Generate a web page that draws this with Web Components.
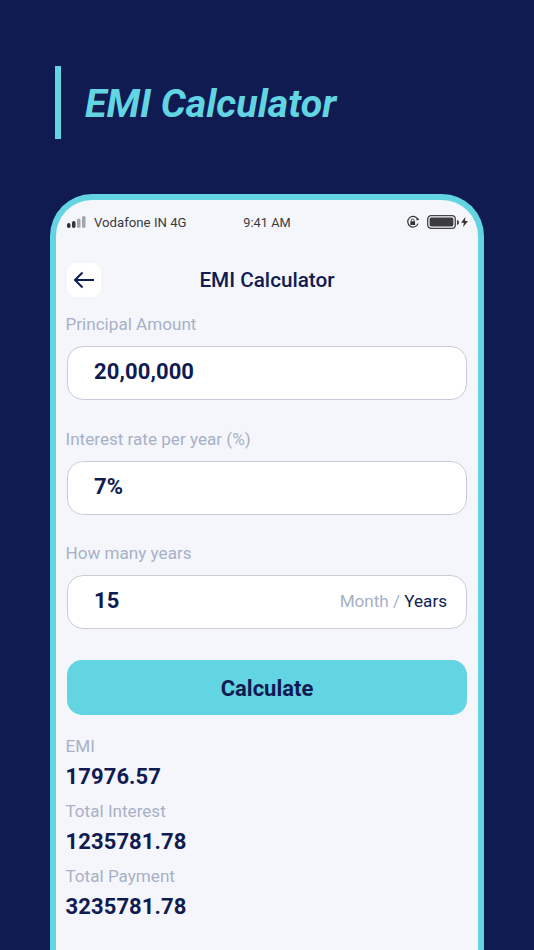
<!DOCTYPE html>
<html>
<head>
<meta charset="utf-8">
<title>EMI Calculator</title>
<style>
  html, body { margin: 0; height: 950px; overflow: hidden; background: #101b52; }
  body { font-family: Roboto, "Liberation Sans", sans-serif; }
</style>
</head>
<body>
<promo-page>
  <promo-title slot="title">EMI Calculator</promo-title>
  <phone-frame>
    <status-bar></status-bar>
    <app-header>EMI Calculator</app-header>
    <emi-field label="Principal Amount" value="20,00,000"></emi-field>
    <emi-field label="Interest rate per year (%)" value="7%"></emi-field>
    <emi-field label="How many years" value="15" unit></emi-field>
    <calc-button>Calculate</calc-button>
    <emi-result label="EMI" value="17976.57"></emi-result>
    <emi-result label="Total Interest" value="1235781.78"></emi-result>
    <emi-result label="Total Payment" value="3235781.78"></emi-result>
  </phone-frame>
</promo-page>

<script>
// small helper, every element just sets its html in the constructor
class Base extends HTMLElement {
  constructor(html) {
    super();
    this._shadowRoot = this.attachShadow({ mode: 'open' });
    this._shadowRoot.innerHTML = html;
  }
}

class PromoPage extends Base {
  constructor() {
    super(`
    <style>
      :host { display: block; width: 534px; height: 950px; overflow: hidden; padding: 66px 0 0 50px; box-sizing: border-box; }
    </style>
    <slot name="title"></slot>
    <slot></slot>`);
  }
}

class PromoTitle extends Base {
  constructor() {
    super(`
    <style>
      :host { display: flex; align-items: center; height: 73px; margin: 0 0 55px 5px; border-left: 6px solid #62d4e2; padding-left: 24px; box-sizing: border-box; }
      span { font: italic 700 39.4px/1 Roboto, sans-serif; color: #62d4e2; position: relative; top: 1px; }
    </style>
    <span><slot></slot></span>`);
  }
}

class PhoneFrame extends Base {
  constructor() {
    super(`
    <style>
      :host { display: block; width: 434px; height: 780px; box-sizing: border-box; background: #f5f6fb; border: 6px solid #62d4e2; border-bottom: 0; border-radius: 42px 42px 0 0; padding: 0 11px 0 10px; }
    </style>
    <slot></slot>`);
  }
}

class StatusBar extends Base {
  constructor() {
    super(`
    <style>
      :host { display: grid; grid-template-columns: 1fr auto 1fr; align-items: center; height: 44px; margin: 0 -1px 19px 0; font: 400 13.2px Roboto, sans-serif; color: #3a3a3c; }
      .left, .right { display: flex; align-items: center; }
      .left { gap: 7px; margin-left: 1px; }
      .right { justify-content: flex-end; margin-right: 0; }
      svg { display: block; }
      .time { font-size: 12.8px; }
    </style>
    <div class="left">
      <svg width="20" height="12" viewBox="0 0 20 12">
        <rect x="0" y="7" width="3.5" height="5" rx="1.7" fill="#333"/>
        <rect x="5" y="5" width="3.5" height="7" rx="1.7" fill="#333"/>
        <rect x="10" y="2.500" width="3.5" height="9.500" rx="1.7" fill="#a5a5a8"/>
        <rect x="15" y="0" width="3.5" height="12" rx="1.7" fill="#a5a5a8"/>
      </svg>
      <span>Vodafone IN 4G</span>
    </div>
    <span class="time">9:41 AM</span>
    <div class="right">
      <svg width="14" height="14" viewBox="0 0 14 14" style="margin-right:7px">
        <path d="M12 8.6A5.3 5.3 0 1 1 11.6 4" fill="none" stroke="#333" stroke-width="1.2"/>
        <path d="M13.6 4.6L10.4 5.6 10.9 2.4z" fill="#333"/>
        <rect x="4.3" y="6.2" width="4.8" height="3.8" rx=".5" fill="#333"/>
        <path d="M5.3 6.4V5.3a1.4 1.4 0 0 1 2.8 0v1.1" fill="none" stroke="#333" stroke-width=".9"/>
      </svg>
      <svg width="29" height="14" viewBox="0 0 29 14">
        <rect x=".7" y=".7" width="27.6" height="12.6" rx="3.4" fill="none" stroke="#444" stroke-width="1.3"/>
        <rect x="2.6" y="2.6" width="23.8" height="8.8" rx="1.6" fill="#3c3c3e"/>
      </svg>
      <svg width="2" height="5" viewBox="0 0 2 5" style="margin-left:1px"><path d="M0 0c1.2.3 2 1.2 2 2.500s-.8 2.200-2 2.500z" fill="#444"/></svg>
      <svg width="7" height="10" viewBox="0 0 7 10" style="margin-left:2px"><path d="M4.400 0L0 5.800h2.800L2.200 10 7 3.900H4z" fill="#333"/></svg>
    </div>`);
  }
}

class AppHeader extends Base {
  constructor() {
    super(`
    <style>
      :host { display: flex; align-items: center; height: 34px; position: relative; margin-left: 1px; margin-bottom: 17px; }
      .back { width: 34px; height: 34px; border-radius: 9px; background: #fff; display: flex; align-items: center; justify-content: center; }
      h1 { flex: 1; margin: 0 34px 0 0; text-align: center; font: 500 20.7px/1 Roboto, sans-serif; color: #101b52; }
    </style>
    <div class="back">
      <svg width="22" height="18" viewBox="0 0 22 18"><path d="M21 9H2M9.500 1.500L2 9l7.500 7.500" fill="none" stroke="#101b52" stroke-width="2"/></svg>
    </div>
    <h1><slot></slot></h1>`);
  }
}

class EmiField extends Base {
  constructor() {
    super(`
    <style>
      :host { display: block; margin-bottom: 28.5px; }
      label { display: block; font: 400 17.1px/20px Roboto, sans-serif; color: #a7b1c6; margin: 0 0 12px -0.5px; white-space: nowrap; }
      .box { display: flex; align-items: center; justify-content: space-between; height: 54px; box-sizing: border-box; margin-left: 1px; border: 1px solid #c9ccd8; border-radius: 16px; background: #fff; padding: 0 19px 0 26px; }
      .val { font: 700 22px/1 Roboto, sans-serif; color: #101b52; letter-spacing: .1px; position: relative; top: -1px; }
      .unit { font: 400 17.1px/1 Roboto, sans-serif; color: #a7b1c6; }
      .unit b { font-weight: 400; color: #101b52; }
    </style>
    <label></label>
    <div class="box"><span class="val"></span></div>`);
  }
  connectedCallback() {
    this._shadowRoot.querySelector('label').textContent = this.getAttribute('label');
    this._shadowRoot.querySelector('.val').textContent = this.getAttribute('value');
    if (this.hasAttribute('unit')) {
      var u = document.createElement('span');
      u.className = 'unit';
      u.innerHTML = 'Month / <b>Years</b>';
      this._shadowRoot.querySelector('.box').appendChild(u);
    }
  }
}

class CalcButton extends Base {
  constructor() {
    super(`
    <style>
      :host { display: block; margin: 31px 0 21px 1px; }
      button { display: block; width: 100%; height: 55px; border: 0; border-radius: 15px; background: #62d4e2; color: #101b52; font: 700 22px/1 Roboto, sans-serif; padding: 2px 0 0; }
    </style>
    <button><slot></slot></button>`);
  }
}

class EmiResult extends Base {
  constructor() {
    super(`
    <style>
      :host { display: block; margin: 0 0 10px -0.5px; }
      .l { font: 400 17.1px/20px Roboto, sans-serif; color: #a7b1c6; }
      .v { font: 700 22px/28px Roboto, sans-serif; color: #101b52; margin-top: 7px; letter-spacing: .1px; }
    </style>
    <div class="l"></div>
    <div class="v"></div>`);
  }
  connectedCallback() {
    this._shadowRoot.querySelector('.l').textContent = this.getAttribute('label');
    this._shadowRoot.querySelector('.v').textContent = this.getAttribute('value');
  }
}

customElements.define('promo-page', PromoPage);
customElements.define('promo-title', PromoTitle);
customElements.define('phone-frame', PhoneFrame);
customElements.define('status-bar', StatusBar);
customElements.define('app-header', AppHeader);
customElements.define('emi-field', EmiField);
customElements.define('calc-button', CalcButton);
customElements.define('emi-result', EmiResult);
</script>
</body>
</html>
